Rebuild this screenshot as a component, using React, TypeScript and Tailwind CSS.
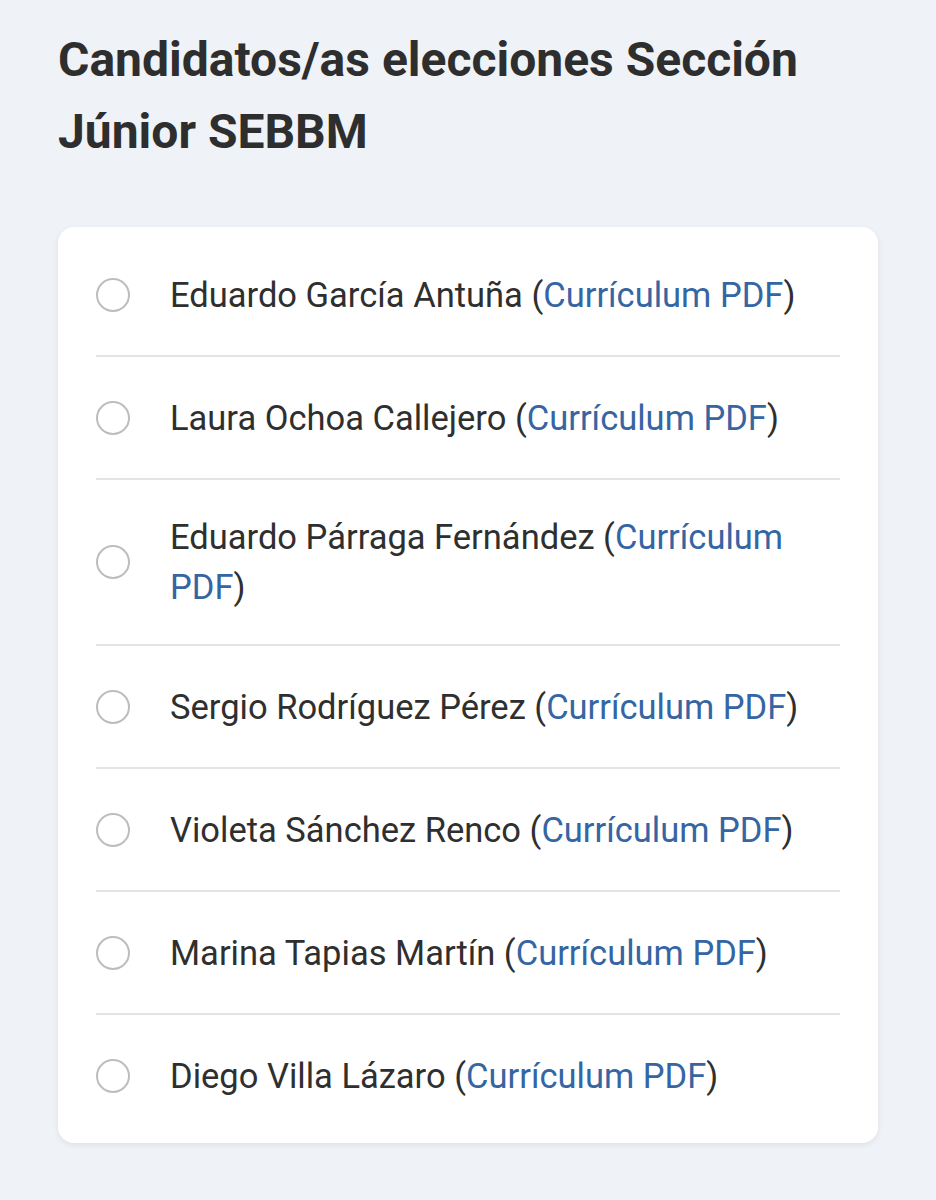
const candidates = [
  "Eduardo García Antuña",
  "Laura Ochoa Callejero",
  "Eduardo Párraga Fernández",
  "Sergio Rodríguez Pérez",
  "Violeta Sánchez Renco",
  "Marina Tapias Martín",
  "Diego Villa Lázaro",
];

function CandidateRow({ name, last }: { name: string; last: boolean }) {
  return (
    <label
      className={`flex items-center gap-[40px] py-[32px] ${last ? "" : "border-b-2 border-[#e4e4e4]"}`}
    >
      <span className="h-[34px] w-[34px] shrink-0 rounded-full border-2 border-[#bdbdbd]" />
      <span className="flex min-h-[57px] items-center text-[34.5px] leading-[50px] text-[#2f2f2f]">
        <span>
          {name} (<a className="text-[#3565a3]">Currículum PDF</a>)
        </span>
      </span>
    </label>
  );
}

export default function App() {
  return (
    <div
      className="min-h-[1200px] bg-[#eff2f6] px-[58px] pt-[24px] pb-10"
      style={{ fontFamily: "Roboto, 'Liberation Sans', sans-serif" }}
    >
      <h1 className="text-[48px] font-bold leading-[72px] text-[#2e2e2e]">
        Candidatos/as elecciones Sección Júnior SEBBM
      </h1>
      <div className="mt-[59px] rounded-[16px] bg-white px-[38px] py-[7px] shadow-[0_2px_6px_rgba(0,0,0,0.08)]">
        {candidates.map((name, i) => (
          <CandidateRow key={name} name={name} last={i === candidates.length - 1} />
        ))}
      </div>
    </div>
  );
}
